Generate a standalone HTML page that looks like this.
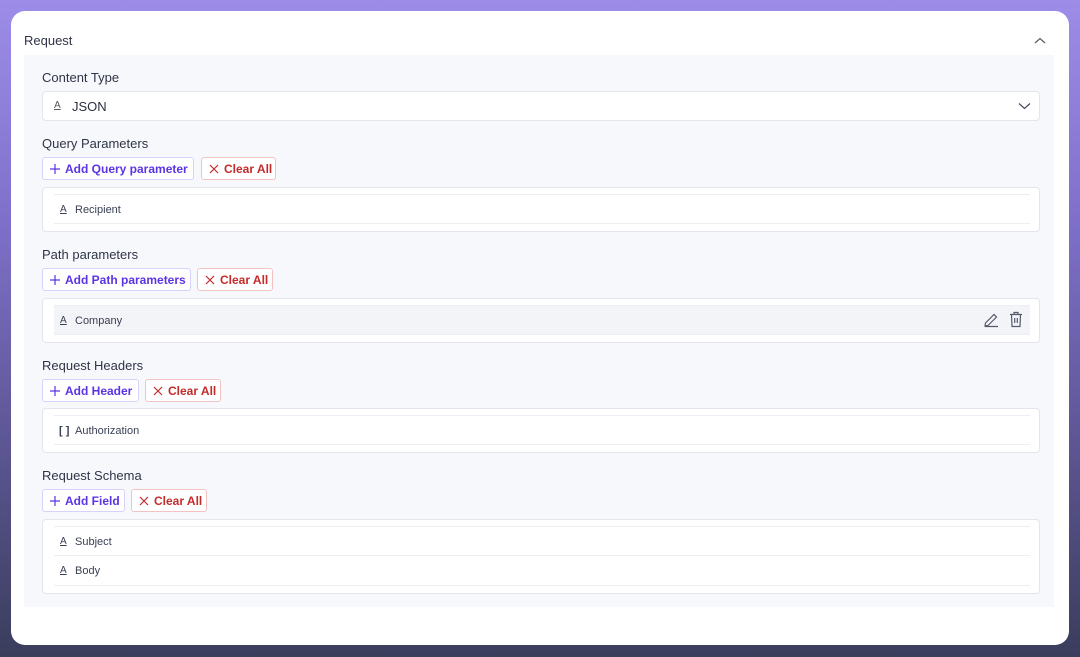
<!DOCTYPE html>
<html><head><style>
*{box-sizing:border-box;margin:0;padding:0}
body{width:1080px;height:657px;overflow:hidden;font-family:"Liberation Sans",sans-serif;background:linear-gradient(180deg,#9d8de9 0%,#7d6fc8 35%,#5a548f 70%,#3a3d5c 100%);position:relative}
.card{position:absolute;left:11px;top:11px;width:1058px;height:634px;background:#fff;border-radius:14px}
.panel{position:absolute;left:24px;top:55px;width:1030px;height:552px;background:#f7f8fc}
.a{position:absolute}
.lbl{position:absolute;left:42px;font-size:13px;color:#2f3547;line-height:16px}
.btn{position:absolute;height:23px;border-radius:3px;font-size:12px;font-weight:bold;line-height:22px;padding-left:22px;background:#fff;white-space:nowrap;overflow:hidden}
.btn svg{position:absolute;left:7px;top:6px}
.add{border:1px solid #d6d2fb;color:#5b34e3}
.clr{border:1px solid #f3c3c3;color:#c42b2b}
.box{position:absolute;left:42px;width:998px;background:#fff;border:1px solid #e3e5ec;border-radius:4px}
.row{position:absolute;left:11px;width:976px;height:30px;border-top:1px solid #eceef3;border-bottom:1px solid #eceef3;font-size:11px;color:#3a4053;line-height:30px;padding-left:21px}
.ic{position:absolute;left:6px;top:0;font-size:10px;text-decoration:underline;color:#3a4053}
</style></head><body>
<div class="card"></div>
<div class="a" style="left:24px;top:33px;font-size:13px;color:#2f3547">Request</div>
<svg class="a" style="left:1034px;top:37px" width="12" height="8" viewBox="0 0 12 8"><path d="M1 6L6 1.5L11 6" fill="none" stroke="#555b6b" stroke-width="1.2"/></svg>
<div class="panel"></div>

<div class="lbl" style="top:70px">Content Type</div>
<div class="box" style="top:91px;height:30px;border-radius:4px">
 <span class="a" style="left:11px;top:8px;font-size:10px;text-decoration:underline;color:#555">A</span>
 <span class="a" style="left:29px;top:7px;font-size:13px;color:#2b3040">JSON</span>
 <svg class="a" style="left:975px;top:10px" width="13" height="8" viewBox="0 0 13 8"><path d="M1 1.5L6.5 6.5L12 1.5" fill="none" stroke="#444a5a" stroke-width="1.2"/></svg>
</div>

<div class="lbl" style="top:136px">Query Parameters</div>
<div class="btn add" style="left:42px;top:157px;width:152px"><svg width="10" height="10"><path d="M5 0V10M0 5H10" stroke="#5b34e3" stroke-width="1.2"/></svg>Add Query parameter</div>
<div class="btn clr" style="left:201px;top:157px;width:75px"><svg width="10" height="10"><path d="M1 1L9 9M9 1L1 9" stroke="#c42b2b" stroke-width="1.2"/></svg>Clear All</div>
<div class="box" style="top:187px;height:45px"><div class="row" style="top:6px"><span class="ic">A</span>Recipient</div></div>

<div class="lbl" style="top:247px">Path parameters</div>
<div class="btn add" style="left:42px;top:268px;width:149px"><svg width="10" height="10"><path d="M5 0V10M0 5H10" stroke="#5b34e3" stroke-width="1.2"/></svg>Add Path parameters</div>
<div class="btn clr" style="left:197px;top:268px;width:76px"><svg width="10" height="10"><path d="M1 1L9 9M9 1L1 9" stroke="#c42b2b" stroke-width="1.2"/></svg>Clear All</div>
<div class="box" style="top:298px;height:45px"><div class="row" style="top:6px;background:#f3f4f7"><span class="ic">A</span>Company
 <svg class="a" style="left:929px;top:6px" width="16" height="16" viewBox="0 0 16 16"><path d="M2 14L2.5 11L11 2.5L13.5 5L5 13.5Z M2 14.5H15" fill="none" stroke="#555b6b" stroke-width="1.2"/></svg>
 <svg class="a" style="left:955px;top:5px" width="14" height="17" viewBox="0 0 14 17"><path d="M1 3.5H13 M5 3.5V1.5H9V3.5 M2.5 3.5L3 15.5H11L11.5 3.5 M5.7 7V12 M8.3 7V12" fill="none" stroke="#555b6b" stroke-width="1.2"/></svg>
</div></div>

<div class="lbl" style="top:358px">Request Headers</div>
<div class="btn add" style="left:42px;top:379px;width:97px"><svg width="10" height="10"><path d="M5 0V10M0 5H10" stroke="#5b34e3" stroke-width="1.2"/></svg>Add Header</div>
<div class="btn clr" style="left:145px;top:379px;width:76px"><svg width="10" height="10"><path d="M1 1L9 9M9 1L1 9" stroke="#c42b2b" stroke-width="1.2"/></svg>Clear All</div>
<div class="box" style="top:408px;height:45px"><div class="row" style="top:6px"><span class="ic" style="text-decoration:none;font-size:11px;left:5px;font-weight:bold">[ ]</span>Authorization</div></div>

<div class="lbl" style="top:468px">Request Schema</div>
<div class="btn add" style="left:42px;top:489px;width:83px"><svg width="10" height="10"><path d="M5 0V10M0 5H10" stroke="#5b34e3" stroke-width="1.2"/></svg>Add Field</div>
<div class="btn clr" style="left:131px;top:489px;width:76px"><svg width="10" height="10"><path d="M1 1L9 9M9 1L1 9" stroke="#c42b2b" stroke-width="1.2"/></svg>Clear All</div>
<div class="box" style="top:519px;height:75px">
 <div class="row" style="top:6px"><span class="ic">A</span>Subject</div>
 <div class="row" style="top:36px;border-top:none"><span class="ic">A</span>Body</div>
</div>
</body></html>
